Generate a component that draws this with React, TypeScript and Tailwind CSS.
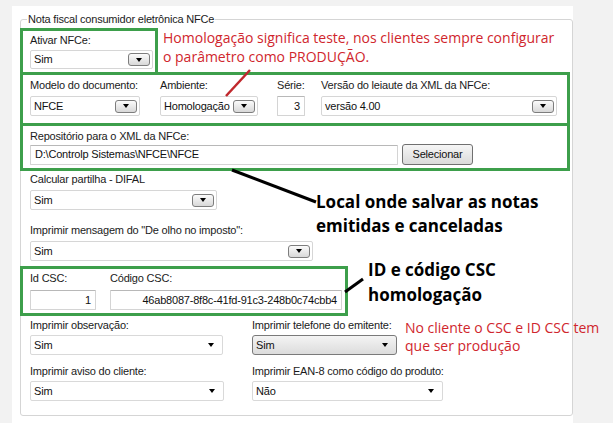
import React from "react";

const lbl = "text-[11px] leading-[13px] text-[#1b1b1b] tracking-[-0.2px] whitespace-nowrap";
const ctl = "text-[11px] leading-[13px] text-[#111] tracking-[-0.2px] whitespace-nowrap";
const box = "border-[3px] border-[#3d9f4b]";
const redNote = "font-['Open_Sans',sans-serif] text-[14px] text-[#d0262d] whitespace-nowrap";
const blackNote = "font-['Open_Sans',sans-serif] text-[17px] font-bold text-black whitespace-nowrap";

function Tri() {
    return <span className="block w-0 h-0 shrink-0 border-x-[3.5px] border-x-transparent border-t-[4px] border-t-black" />;
}

function Combo({ value, className }: { value: string; className: string }) {
    return (
        <div className={`flex items-center justify-between bg-white border border-[#d6d6d6] rounded-[2px] pl-[3px] pr-[2px] ${className}`}>
            <span className={ctl}>{value}</span>
            <span className="flex shrink-0 items-center justify-center w-[22px] h-[13px] rounded-[3px] border border-[#7d7d7d] bg-linear-to-b from-[#fbfbfb] to-[#d8d8d8]">
                <Tri />
            </span>
        </div>
    );
}

function Flat({ value, className, raised }: { value: string; className: string; raised?: boolean }) {
    const look = raised
        ? "border-[#7a7a7a] rounded-[3px] bg-linear-to-b from-[#f4f4f4] to-[#dcdcdc]"
        : "border-[#d9d9d9] rounded-[2px] bg-white";
    return (
        <div className={`flex items-center justify-between border pl-[3px] pr-[8px] ${look} ${className}`}>
            <span className={ctl}>{value}</span>
            <Tri />
        </div>
    );
}

function Field({ value, className, right }: { value: string; className: string; right?: boolean }) {
    return (
        <div className={`flex items-center bg-white border border-[#d4d4d4] border-t-[#b8b8b8] rounded-[1px] px-[4px] ${right ? "justify-end" : ""} ${className}`}>
            <span className={ctl}>{value}</span>
        </div>
    );
}

export default function App() {
    return (
        <div className="relative w-[613px] h-[423px] overflow-hidden bg-[#f2f2f2] pl-[12px] pt-[6px] font-['Liberation_Sans',Arial,sans-serif]">
            <div className="w-[561px] h-[417px] bg-white pl-[8px] pt-[13px]">
                <div className="relative w-[553px] h-[397px] border border-[#d5d5d5] rounded-[3px] flex flex-col">
                    <span className={`absolute left-[6px] -top-[7px] bg-white px-[1px] ${lbl}`}>
                        Nota fiscal consumidor eletrônica NFCe
                    </span>

                    {/* ativar + aviso */}
                    <div className="flex -ml-px mt-[8px]">
                        <div className={`shrink-0 w-[138px] h-[47px] pl-[7px] pt-[3px] ${box}`}>
                            <div className={lbl}>Ativar NFCe:</div>
                            <Combo value="Sim" className="mt-[3px] w-[123px] h-[19px]" />
                        </div>
                        <div className={`ml-[5px] leading-[19px] ${redNote}`}>
                            <div>Homologação significa teste, nos clientes sempre configurar</div>
                            <div>o parâmetro como PRODUÇÃO.</div>
                        </div>
                    </div>

                    {/* modelo / ambiente / serie / versao */}
                    <div className={`flex shrink-0 -ml-px -mt-[3px] w-[550px] h-[54px] pl-[7px] pt-[4px] ${box}`}>
                        <div className="shrink-0 w-[130px]">
                            <div className={lbl}>Modelo do documento:</div>
                            <Combo value="NFCE" className="mt-[4px] w-[110px] h-[20px]" />
                        </div>
                        <div className="shrink-0 w-[117px]">
                            <div className={lbl}>Ambiente:</div>
                            <Combo value="Homologação" className="mt-[4px] w-[98px] h-[20px]" />
                        </div>
                        <div className="shrink-0 w-[44px]">
                            <div className={lbl}>Série:</div>
                            <Field value="3" right className="mt-[4px] w-[28px] h-[20px]" />
                        </div>
                        <div className="shrink-0">
                            <div className={lbl}>Versão do leiaute da XML da NFCe:</div>
                            <Combo value="versão 4.00" className="mt-[4px] w-[236px] h-[20px]" />
                        </div>
                    </div>

                    {/* repositorio */}
                    <div className={`shrink-0 -ml-px -mt-[3px] w-[550px] h-[48px] pl-[7px] pt-[4px] ${box}`}>
                        <div className={lbl}>Repositório para o XML da NFCe:</div>
                        <div className="flex items-center mt-[1px]">
                            <Field value="D:\Controlp Sistemas\NFCE\NFCE" className="w-[368px] h-[20px]" />
                            <button className="ml-[4px] w-[71px] h-[21px] rounded-[3px] border border-[#707070] bg-linear-to-b from-[#f6f6f6] to-[#dadada] text-[11px] text-[#111] tracking-[-0.2px]">
                                Selecionar
                            </button>
                        </div>
                    </div>

                    {/* difal / de olho */}
                    <div className="flex ml-[9px] mt-[2px]">
                        <div className="shrink-0 w-[286px]">
                            <div className={lbl}>Calcular partilha - DIFAL</div>
                            <Combo value="Sim" className="mt-[4px] w-[187px] h-[20px]" />
                            <div className={`mt-[14px] ${lbl}`}>Imprimir mensagem do "De olho no imposto":</div>
                            <Combo value="Sim" className="mt-[4px] w-[283px] h-[20px]" />
                        </div>
                        <div className={`mt-[17px] leading-[24px] ${blackNote}`}>
                            <div>Local onde salvar as notas</div>
                            <div>emitidas e canceladas</div>
                        </div>
                    </div>

                    {/* csc */}
                    <div className="flex -ml-px mt-[5px]">
                        <div className={`flex shrink-0 w-[328px] h-[50px] pl-[7px] pt-[3px] ${box}`}>
                            <div className="shrink-0 w-[80px]">
                                <div className={lbl}>Id CSC:</div>
                                <Field value="1" right className="mt-[5px] w-[66px] h-[20px]" />
                            </div>
                            <div className="shrink-0">
                                <div className={lbl}>Código CSC:</div>
                                <Field value="46ab8087-8f8c-41fd-91c3-248b0c74cbb4" right className="mt-[5px] w-[232px] h-[20px]" />
                            </div>
                        </div>
                        <div className={`ml-[20px] -mt-[9px] leading-[25px] ${blackNote}`}>
                            <div>ID e código CSC</div>
                            <div>homologação</div>
                        </div>
                    </div>

                    {/* impressao */}
                    <div className="flex ml-[9px] mt-[3px] h-[36px]">
                        <div className="shrink-0 w-[222px]">
                            <div className={lbl}>Imprimir observação:</div>
                            <Flat value="Sim" className="mt-[3px] w-[193px] h-[20px]" />
                        </div>
                        <div className="shrink-0 w-[153px]">
                            <div className={lbl}>Imprimir telefone do emitente:</div>
                            <Flat value="Sim" raised className="mt-[3px] w-[145px] h-[20px]" />
                        </div>
                        <div className={`leading-[18px] ${redNote}`}>
                            <div>No cliente o CSC e ID CSC tem</div>
                            <div>que ser produção</div>
                        </div>
                    </div>
                    <div className="flex ml-[9px] mt-[10px]">
                        <div className="shrink-0 w-[222px]">
                            <div className={lbl}>Imprimir aviso do cliente:</div>
                            <Flat value="Sim" className="mt-[3px] w-[194px] h-[20px]" />
                        </div>
                        <div className="shrink-0">
                            <div className={lbl}>Imprimir EAN-8 como código do produto:</div>
                            <Flat value="Não" className="mt-[3px] w-[191px] h-[20px]" />
                        </div>
                    </div>
                </div>
            </div>

            <svg className="absolute inset-0 pointer-events-none" width="613" height="423" viewBox="0 0 613 423">
                <line x1="250" y1="70" x2="226" y2="96" stroke="#c0282d" strokeWidth="2.5" />
                <line x1="232" y1="170" x2="316" y2="202" stroke="#000" strokeWidth="3" />
                <line x1="345" y1="292" x2="363" y2="279" stroke="#000" strokeWidth="3" />
            </svg>
        </div>
    );
}
